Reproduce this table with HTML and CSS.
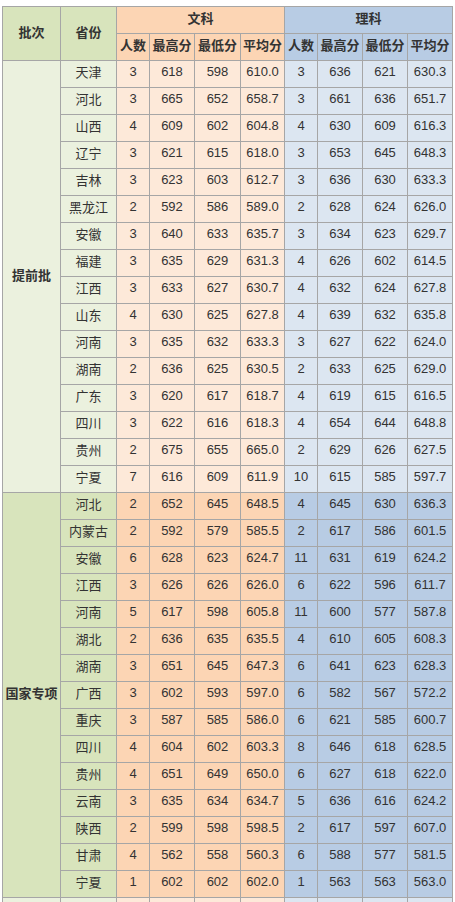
FILE: index.html
```html
<!DOCTYPE html>
<html lang="zh-CN">
<head>
<meta charset="utf-8">
<title>分数表</title>
<link rel="stylesheet" href="styles.css">
</head>
<body>
<div class="wrap">
<table class="scores">
<colgroup>
<col class="c-batch"><col class="c-prov">
<col class="c-n"><col class="c-s"><col class="c-s2"><col class="c-a">
<col class="c-n"><col class="c-s"><col class="c-s"><col class="c-s">
</colgroup>
<thead>
<tr>
<th rowspan="2" class="g">批次</th>
<th rowspan="2" class="g">省份</th>
<th colspan="4" class="w">文科</th>
<th colspan="4" class="l">理科</th>
</tr>
<tr>
<th class="w">人数</th><th class="w">最高分</th><th class="w">最低分</th><th class="w">平均分</th>
<th class="l">人数</th><th class="l">最高分</th><th class="l">最低分</th><th class="l">平均分</th>
</tr>
</thead>
<tbody class="light">
<tr><td rowspan="16" class="batch">提前批</td><td class="p">天津</td><td class="w">3</td><td class="w">618</td><td class="w">598</td><td class="w">610.0</td><td class="l">3</td><td class="l">636</td><td class="l">621</td><td class="l">630.3</td></tr>
<tr><td class="p">河北</td><td class="w">3</td><td class="w">665</td><td class="w">652</td><td class="w">658.7</td><td class="l">3</td><td class="l">661</td><td class="l">636</td><td class="l">651.7</td></tr>
<tr><td class="p">山西</td><td class="w">4</td><td class="w">609</td><td class="w">602</td><td class="w">604.8</td><td class="l">4</td><td class="l">630</td><td class="l">609</td><td class="l">616.3</td></tr>
<tr><td class="p">辽宁</td><td class="w">3</td><td class="w">621</td><td class="w">615</td><td class="w">618.0</td><td class="l">3</td><td class="l">653</td><td class="l">645</td><td class="l">648.3</td></tr>
<tr><td class="p">吉林</td><td class="w">3</td><td class="w">623</td><td class="w">603</td><td class="w">612.7</td><td class="l">3</td><td class="l">636</td><td class="l">630</td><td class="l">633.3</td></tr>
<tr><td class="p">黑龙江</td><td class="w">2</td><td class="w">592</td><td class="w">586</td><td class="w">589.0</td><td class="l">2</td><td class="l">628</td><td class="l">624</td><td class="l">626.0</td></tr>
<tr><td class="p">安徽</td><td class="w">3</td><td class="w">640</td><td class="w">633</td><td class="w">635.7</td><td class="l">3</td><td class="l">634</td><td class="l">623</td><td class="l">629.7</td></tr>
<tr><td class="p">福建</td><td class="w">3</td><td class="w">635</td><td class="w">629</td><td class="w">631.3</td><td class="l">4</td><td class="l">626</td><td class="l">602</td><td class="l">614.5</td></tr>
<tr><td class="p">江西</td><td class="w">3</td><td class="w">633</td><td class="w">627</td><td class="w">630.7</td><td class="l">4</td><td class="l">632</td><td class="l">624</td><td class="l">627.8</td></tr>
<tr><td class="p">山东</td><td class="w">4</td><td class="w">630</td><td class="w">625</td><td class="w">627.8</td><td class="l">4</td><td class="l">639</td><td class="l">632</td><td class="l">635.8</td></tr>
<tr><td class="p">河南</td><td class="w">3</td><td class="w">635</td><td class="w">632</td><td class="w">633.3</td><td class="l">3</td><td class="l">627</td><td class="l">622</td><td class="l">624.0</td></tr>
<tr><td class="p">湖南</td><td class="w">2</td><td class="w">636</td><td class="w">625</td><td class="w">630.5</td><td class="l">2</td><td class="l">633</td><td class="l">625</td><td class="l">629.0</td></tr>
<tr><td class="p">广东</td><td class="w">3</td><td class="w">620</td><td class="w">617</td><td class="w">618.7</td><td class="l">4</td><td class="l">619</td><td class="l">615</td><td class="l">616.5</td></tr>
<tr><td class="p">四川</td><td class="w">3</td><td class="w">622</td><td class="w">616</td><td class="w">618.3</td><td class="l">4</td><td class="l">654</td><td class="l">644</td><td class="l">648.8</td></tr>
<tr><td class="p">贵州</td><td class="w">2</td><td class="w">675</td><td class="w">655</td><td class="w">665.0</td><td class="l">2</td><td class="l">629</td><td class="l">626</td><td class="l">627.5</td></tr>
<tr><td class="p">宁夏</td><td class="w">7</td><td class="w">616</td><td class="w">609</td><td class="w">611.9</td><td class="l">10</td><td class="l">615</td><td class="l">585</td><td class="l">597.7</td></tr>
</tbody>
<tbody class="dark">
<tr><td rowspan="15" class="batch">国家专项</td><td class="p">河北</td><td class="w">2</td><td class="w">652</td><td class="w">645</td><td class="w">648.5</td><td class="l">4</td><td class="l">645</td><td class="l">630</td><td class="l">636.3</td></tr>
<tr><td class="p">内蒙古</td><td class="w">2</td><td class="w">592</td><td class="w">579</td><td class="w">585.5</td><td class="l">2</td><td class="l">617</td><td class="l">586</td><td class="l">601.5</td></tr>
<tr><td class="p">安徽</td><td class="w">6</td><td class="w">628</td><td class="w">623</td><td class="w">624.7</td><td class="l">11</td><td class="l">631</td><td class="l">619</td><td class="l">624.2</td></tr>
<tr><td class="p">江西</td><td class="w">3</td><td class="w">626</td><td class="w">626</td><td class="w">626.0</td><td class="l">6</td><td class="l">622</td><td class="l">596</td><td class="l">611.7</td></tr>
<tr><td class="p">河南</td><td class="w">5</td><td class="w">617</td><td class="w">598</td><td class="w">605.8</td><td class="l">11</td><td class="l">600</td><td class="l">577</td><td class="l">587.8</td></tr>
<tr><td class="p">湖北</td><td class="w">2</td><td class="w">636</td><td class="w">635</td><td class="w">635.5</td><td class="l">4</td><td class="l">610</td><td class="l">605</td><td class="l">608.3</td></tr>
<tr><td class="p">湖南</td><td class="w">3</td><td class="w">651</td><td class="w">645</td><td class="w">647.3</td><td class="l">6</td><td class="l">641</td><td class="l">623</td><td class="l">628.3</td></tr>
<tr><td class="p">广西</td><td class="w">3</td><td class="w">602</td><td class="w">593</td><td class="w">597.0</td><td class="l">6</td><td class="l">582</td><td class="l">567</td><td class="l">572.2</td></tr>
<tr><td class="p">重庆</td><td class="w">3</td><td class="w">587</td><td class="w">585</td><td class="w">586.0</td><td class="l">6</td><td class="l">621</td><td class="l">585</td><td class="l">600.7</td></tr>
<tr><td class="p">四川</td><td class="w">4</td><td class="w">604</td><td class="w">602</td><td class="w">603.3</td><td class="l">8</td><td class="l">646</td><td class="l">618</td><td class="l">628.5</td></tr>
<tr><td class="p">贵州</td><td class="w">4</td><td class="w">651</td><td class="w">649</td><td class="w">650.0</td><td class="l">6</td><td class="l">627</td><td class="l">618</td><td class="l">622.0</td></tr>
<tr><td class="p">云南</td><td class="w">3</td><td class="w">635</td><td class="w">634</td><td class="w">634.7</td><td class="l">5</td><td class="l">636</td><td class="l">616</td><td class="l">624.2</td></tr>
<tr><td class="p">陕西</td><td class="w">2</td><td class="w">599</td><td class="w">598</td><td class="w">598.5</td><td class="l">2</td><td class="l">617</td><td class="l">597</td><td class="l">607.0</td></tr>
<tr><td class="p">甘肃</td><td class="w">4</td><td class="w">562</td><td class="w">558</td><td class="w">560.3</td><td class="l">6</td><td class="l">588</td><td class="l">577</td><td class="l">581.5</td></tr>
<tr><td class="p">宁夏</td><td class="w">1</td><td class="w">602</td><td class="w">602</td><td class="w">602.0</td><td class="l">1</td><td class="l">563</td><td class="l">563</td><td class="l">563.0</td></tr>
</tbody>
<tbody class="light">
<tr><td class="batch"></td><td class="p"></td><td class="w"></td><td class="w"></td><td class="w"></td><td class="w"></td><td class="l"></td><td class="l"></td><td class="l"></td><td class="l"></td></tr>
</tbody>
</table>
</div>
</body>
</html>
```
FILE: styles.css
```css
html, body {
  margin: 0;
  padding: 0;
  background: #ffffff;
}
.wrap {
  padding: 6px 0 0 2px;
}
.scores {
  border-collapse: collapse;
  table-layout: fixed;
  width: 451px;
  font-family: "Liberation Sans", "Noto Sans CJK SC", sans-serif;
  font-size: 13px;
  color: #333333;
}
.c-batch { width: 58px; }
.c-prov { width: 56px; }
.c-n { width: 33px; }
.c-s { width: 45px; }
.c-s2 { width: 46px; }
.c-a { width: 44px; }
.scores th,
.scores td {
  border: 1px solid #a6a6a6;
  height: 22px;
  padding: 0 0 4px 0;
  text-align: center;
  vertical-align: middle;
  line-height: 16px;
  white-space: nowrap;
  overflow: hidden;
}
.scores th {
  font-family: "Noto Sans CJK SC", sans-serif;
  font-weight: bold;
  font-size: 13px;
  color: #333333;
}
.scores .p {
  font-family: "Noto Sans CJK SC", sans-serif;
  font-size: 13px;
}
.scores .batch {
  font-family: "Noto Sans CJK SC", sans-serif;
  font-weight: bold;
  font-size: 13px;
}
thead .g { background: #d8e4bc; }
thead .w { background: #fcd5b4; }
thead .l { background: #b8cce4; }
.light .batch, .light .p { background: #ebf1de; }
.light .w { background: #fde9d9; }
.light .l { background: #dce6f1; }
.dark .batch, .dark .p { background: #d8e4bc; }
.dark .w { background: #fcd5b4; }
.dark .l { background: #b8cce4; }
```
